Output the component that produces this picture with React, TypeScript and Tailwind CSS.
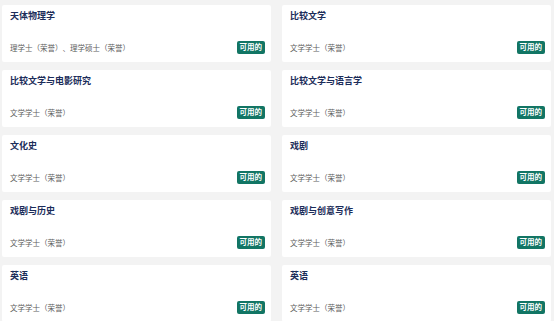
const courses = [
  { title: '天体物理学', degree: '理学士（荣誉）、理学硕士（荣誉）' },
  { title: '比较文学', degree: '文学学士（荣誉）' },
  { title: '比较文学与电影研究', degree: '文学学士（荣誉）' },
  { title: '比较文学与语言学', degree: '文学学士（荣誉）' },
  { title: '文化史', degree: '文学学士（荣誉）' },
  { title: '戏剧', degree: '文学学士（荣誉）' },
  { title: '戏剧与历史', degree: '文学学士（荣誉）' },
  { title: '戏剧与创意写作', degree: '文学学士（荣誉）' },
  { title: '英语', degree: '文学学士（荣誉）' },
  { title: '英语', degree: '文学学士（荣誉）' },
];

const CourseCard = ({ title, degree }: { title: string; degree: string }) => {
  return (
    <div className="bg-white rounded-[2px] h-[57px] pl-[8px] pr-[6px] pt-[5px] pb-[8px] flex flex-col justify-between">
      <h3 className="text-[9px] leading-[12px] font-bold text-[#1c2d5a]">{title}</h3>
      <div className="flex items-end justify-between">
        <span className="text-[7.5px] leading-[10px] text-[#606060] mb-[1px] [text-spacing-trim:space-all]">
          {degree}
        </span>
        <span className="bg-[#127564] text-white text-[7.5px] font-bold leading-[13px] h-[13px] px-[3px] rounded-[2px]">
          可用的
        </span>
      </div>
    </div>
  );
};

const App = () => {
  return (
    <div
      className="min-h-screen bg-[#f3f3f3] pl-[2px] pr-[3px] pt-[5px]"
      style={{ fontFamily: '"Noto Sans", "Noto Sans CJK SC", sans-serif' }}
    >
      <div className="grid grid-cols-2 gap-x-[11px] gap-y-[8px]">
        {courses.map((c, i) => (
          <CourseCard key={i} title={c.title} degree={c.degree} />
        ))}
      </div>
    </div>
  );
};

export default App;
